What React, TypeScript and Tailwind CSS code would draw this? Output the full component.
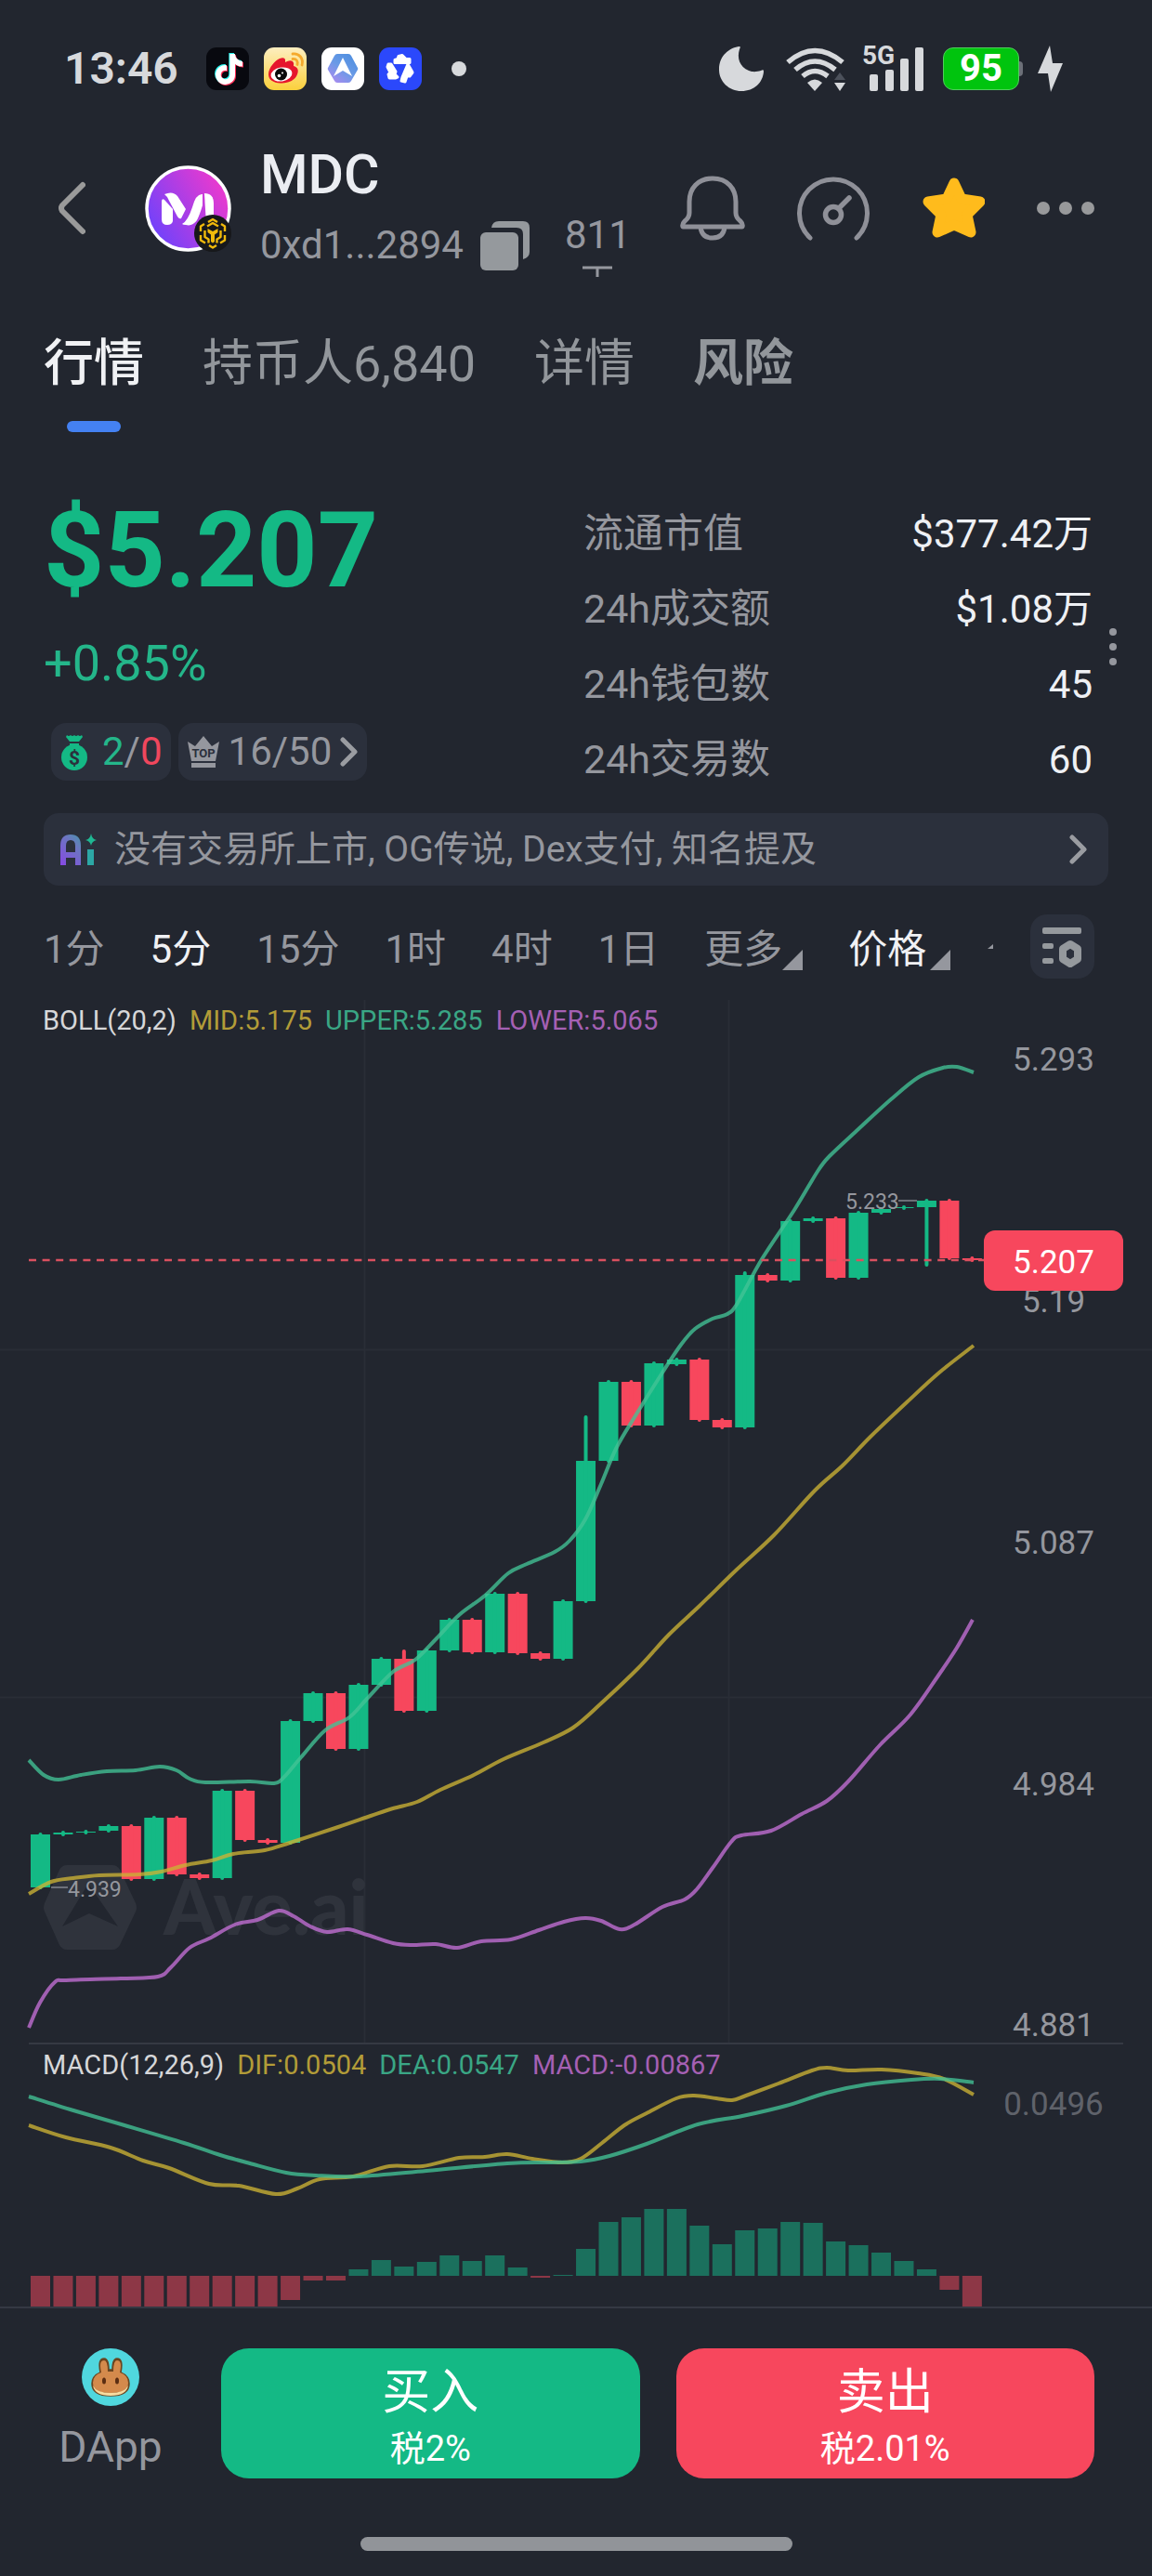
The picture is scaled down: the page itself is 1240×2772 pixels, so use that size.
import React from "react";
import { FaTiktok } from "react-icons/fa";

type Point = [number, number];

const UP = "#14b985";
const DOWN = "#f7475d";
const STEP = 24.46;
const FIRST = 43.5;
const centre = (i: number) => FIRST + i * STEP;

// [rising, body top, body bottom, wick top, wick bottom]
const candles: [boolean, number, number, number?, number?][] = [
  [true, 1974, 2031],
  [true, 1972, 1974],
  [true, 1971, 1972],
  [true, 1965, 1970],
  [false, 1965, 2022],
  [true, 1956, 2022],
  [false, 1956, 2017],
  [false, 2017, 2021],
  [true, 1927, 2021],
  [false, 1927, 1980],
  [false, 1980, 1983],
  [true, 1852, 1983],
  [true, 1822, 1852],
  [false, 1822, 1882],
  [true, 1813, 1882],
  [true, 1785, 1813],
  [false, 1785, 1841, 1775],
  [true, 1776, 1841],
  [true, 1743, 1776],
  [false, 1743, 1778],
  [true, 1715, 1778],
  [false, 1715, 1779],
  [false, 1779, 1785],
  [true, 1723, 1785],
  [true, 1572, 1723, 1523],
  [true, 1487, 1572],
  [false, 1487, 1534],
  [true, 1467, 1534],
  [true, 1463, 1468],
  [false, 1463, 1528],
  [false, 1528, 1536],
  [true, 1372, 1536, 1368],
  [false, 1372, 1378],
  [true, 1314, 1378],
  [true, 1311, 1314],
  [false, 1311, 1375],
  [true, 1305, 1375],
  [true, 1301, 1305],
  [true, 1299, 1300],
  [true, 1292, 1299, 1290, 1363],
  [false, 1292, 1354],
  [false, 1354, 1356],
];

const upper: Point[] = [
  [31, 1894], [47, 1910], [63, 1915], [87, 1910], [115, 1906], [146, 1905], [172, 1901], [190, 1905],
  [204, 1914], [221, 1918], [269, 1917], [295, 1919], [306, 1912], [324, 1891], [350, 1862], [376, 1848],
  [395, 1828], [423, 1799], [447, 1786], [470, 1763], [494, 1738], [522, 1717], [547, 1693], [567, 1683],
  [597, 1670], [613, 1658], [630, 1635], [647, 1597], [663, 1559], [683, 1525], [713, 1477], [733, 1447],
  [748, 1430], [767, 1419], [783, 1414], [794, 1402], [820, 1355], [855, 1302], [881, 1259], [894, 1243],
  [924, 1215], [959, 1183], [989, 1159], [1015, 1149], [1030, 1148], [1048, 1154],
];

const middle: Point[] = [
  [31, 2038], [55, 2025], [79, 2021], [107, 2018], [150, 2017], [174, 2014], [200, 2007], [228, 2002],
  [251, 1995], [285, 1991], [312, 1983], [364, 1966], [399, 1954], [423, 1946], [449, 1939], [474, 1926],
  [510, 1910], [542, 1893], [585, 1875], [617, 1859], [647, 1833], [687, 1795], [720, 1759], [753, 1728],
  [793, 1689], [833, 1652], [877, 1604], [907, 1577], [937, 1546], [976, 1509], [1011, 1477], [1048, 1448],
];

const lower: Point[] = [
  [31, 2182], [43, 2155], [59, 2133], [71, 2131], [130, 2129], [170, 2127], [184, 2117], [204, 2096],
  [225, 2086], [253, 2071], [277, 2066], [300, 2056], [316, 2062], [334, 2073], [352, 2079], [374, 2076],
  [395, 2082], [423, 2091], [443, 2093], [469, 2092], [492, 2096], [518, 2089], [550, 2087], [580, 2077],
  [607, 2068], [630, 2064], [647, 2067], [667, 2076], [683, 2071], [713, 2052], [737, 2044], [750, 2033],
  [767, 2010], [787, 1982], [798, 1975], [830, 1970], [863, 1952], [890, 1938], [913, 1917], [947, 1878],
  [980, 1845], [1010, 1803], [1030, 1773], [1047, 1743],
];

const dif: Point[] = [
  [31, 2287], [71, 2300], [119, 2311], [154, 2325], [182, 2333], [225, 2350], [257, 2352], [297, 2361],
  [320, 2355], [344, 2345], [380, 2342], [419, 2331], [455, 2331], [494, 2322], [522, 2321], [546, 2318],
  [573, 2323], [605, 2327], [625, 2323], [648, 2306], [672, 2287], [696, 2274], [728, 2258], [747, 2255],
  [771, 2258], [788, 2260], [803, 2255], [838, 2242], [874, 2228], [890, 2225], [913, 2228], [949, 2227],
  [988, 2231], [1016, 2237], [1048, 2254],
];

const dea: Point[] = [
  [31, 2256], [79, 2271], [134, 2287], [198, 2306], [237, 2319], [269, 2328], [308, 2338], [340, 2341],
  [387, 2342], [459, 2336], [546, 2328], [592, 2327], [625, 2326], [656, 2320], [696, 2307], [751, 2286],
  [799, 2277], [846, 2266], [890, 2252], [933, 2243], [981, 2238], [1012, 2237], [1048, 2241],
];

// Height of each histogram bar above (positive) or below (negative) the zero line
const histogram = [
  -33, -33, -33, -33, -33, -33, -33, -33, -33, -33, -33, -26, -5, -5, 7, 17, 10, 15, 22, 16, 22, 9, -2, 1,
  29, 58, 63, 72, 72, 54, 34, 49, 51, 58, 57, 37, 33, 25, 16, 7, -15, -33,
];

function smooth(points: Point[]) {
  let d = `M${points[0][0]} ${points[0][1]}`;
  for (let i = 0; i < points.length - 1; i++) {
    const a = points[Math.max(0, i - 1)];
    const b = points[i];
    const c = points[i + 1];
    const e = points[Math.min(points.length - 1, i + 2)];
    d += ` C${b[0] + (c[0] - a[0]) / 6} ${b[1] + (c[1] - a[1]) / 6} ${c[0] - (e[0] - b[0]) / 6} ${c[1] - (e[1] - b[1]) / 6} ${c[0]} ${c[1]}`;
  }
  return d;
}

function Curve({ points, color }: { points: Point[]; color: string }) {
  return <path d={smooth(points)} fill="none" stroke={color} strokeWidth="4" strokeLinejoin="round" opacity="0.78" />;
}

function WeiboIcon() {
  return (
    <svg viewBox="0 0 46 46" className="size-[46px]" aria-hidden="true">
      <defs>
        <linearGradient id="wb" x1="0" y1="0" x2="0" y2="1">
          <stop offset="0" stopColor="#fdeec0" />
          <stop offset="1" stopColor="#fbd03c" />
        </linearGradient>
      </defs>
      <rect width="46" height="46" rx="11" fill="url(#wb)" />
      <path d="M5 29C5 22 12 14 17 12q5-2 6 1 0 2 0 3 5-3 8-1 2 2 1 5c4 1 6 4 4 9-2 6-10 10-18 9.500C10 38 5 35 5 29Z" fill="#e6162d" />
      <ellipse cx="19" cy="29" rx="11.500" ry="7.500" fill="#fff" transform="rotate(-8 19 29)" />
      <circle cx="18.500" cy="29" r="6.500" fill="#0b0b0b" />
      <circle cx="16.500" cy="30.500" r="1.800" fill="#fff" />
      <circle cx="20" cy="27.500" r="1" fill="#fff" />
      <path d="M31 7c7-1 12 5 10 12M31 12.500c4-.5 6 2.500 5 6" fill="none" stroke="#f5a92c" strokeWidth="2.800" strokeLinecap="round" />
    </svg>
  );
}

function AveIcon() {
  return (
    <svg viewBox="0 0 46 46" className="size-[46px]" aria-hidden="true">
      <defs>
        <linearGradient id="av" x1="0.900" y1="0.100" x2="0.200" y2="1">
          <stop offset="0" stopColor="#4f8fe0" />
          <stop offset="0.500" stopColor="#6a9ae6" />
          <stop offset="1" stopColor="#a98bf0" />
        </linearGradient>
      </defs>
      <rect width="46" height="46" rx="11" fill="#fff" />
      <path d="M7 22 14 9q1-2 3-2h12q2 0 3 2l7 13q.6 1 0 2l-7 12q-1 2-3 2H17q-2 0-3-2L7 24q-.6-1 0-2Z" fill="url(#av)" />
      <path d="m23 11 10 20-10-6-10 6Z" fill="#fff" />
    </svg>
  );
}

function BlueIcon() {
  return (
    <svg viewBox="0 0 46 46" className="size-[46px]" aria-hidden="true">
      <rect width="46" height="46" rx="11" fill="#2b48fb" />
      <g fill="#fff" stroke="#fff" strokeWidth="3" strokeLinejoin="round">
        <path d="M17 16.500v-3l3-1 1-3 4-1 4 4h4v4Z" />
        <path d="m10 18 3 0 5 8-1 3 3 3-2 1h-7l-1-4 2-2-3-6Z" />
        <path d="m31 18 4 7 1 2-3 4-3 0-2 6-4-1 1-4Z" />
      </g>
    </svg>
  );
}

function StatusBar() {
  return (
    <div className="flex h-[148px] items-center justify-between pr-[96px] pl-[69px] text-[#d7d9dc]">
      <div className="flex items-center gap-4">
        <span className="mr-[14px] text-[48px] leading-[46px] font-semibold">13:46</span>
        <span className="relative size-[46px] rounded-[11px] bg-[#08090f]">
          <FaTiktok className="absolute top-[6px] left-[7px] size-[33px] text-[#25f4ee]" />
          <FaTiktok className="absolute top-[8px] left-[9px] size-[33px] text-[#fe2c55]" />
          <FaTiktok className="absolute top-[7px] left-[8px] size-[33px] text-white" />
        </span>
        <WeiboIcon />
        <AveIcon />
        <BlueIcon />
        <span className="ml-4 size-4 rounded-full bg-[#d7d9dc]" />
      </div>
      <div className="flex items-center">
        <svg viewBox="0 0 48 48" className="size-12" fill="currentColor" aria-hidden="true">
          <path d="M22 0C12 1 0 9 0 25c0 13 11 23 24 23 14 0 23-9 24-21 0-2-1-2-3-1-4 1-8 2-13 0C22 22 19 12 22 3c1-2 1-3 0-3Z" />
        </svg>
        <svg viewBox="0 0 66 48" className="ml-6 h-12 w-[66px]" fill="none" stroke="currentColor" strokeWidth="5.500" aria-hidden="true">
          <path d="M2 17Q31-8 61 17M10 25Q31 7 53 25M18 32Q31 21 45 32" />
          <path d="m31 48-8-9q8-7 16 0Z" fill="currentColor" stroke="none" />
          <path d="m52 36 6-8 6 8Z" fill="#4c515b" stroke="none" />
          <path d="M52 39h12l-6 9Z" fill="currentColor" stroke="none" />
        </svg>
        <div className="relative ml-4 h-12 w-[67px]">
          <span className="absolute top-0 left-0 text-[28px] leading-5 font-bold">5G</span>
          <svg viewBox="0 0 67 48" className="h-12 w-[67px]" fill="currentColor" aria-hidden="true">
            <rect x="8" y="30" width="9" height="18" rx="2" />
            <rect x="25" y="25" width="9" height="23" rx="2" />
            <rect x="41" y="13" width="9" height="35" rx="2" />
            <rect x="57" y="1" width="9" height="47" rx="2" />
          </svg>
        </div>
        <div className="ml-5 flex items-center">
          <span className="flex h-[46px] w-[82px] items-center justify-center rounded-[11px] border border-[#4fce5c] bg-[#00c40e] text-[40px] leading-10 font-bold text-white">
            95
          </span>
          <span className="h-4 w-1 rounded-r bg-[#6c7078]" />
        </div>
        <svg viewBox="0 0 27 50" className="ml-4 h-[50px] w-[27px]" fill="currentColor" aria-hidden="true">
          <path d="M13 0 0 30h11l3 20 13-31H16Z" />
        </svg>
      </div>
    </div>
  );
}

function TokenLogo() {
  return (
    <div className="relative ml-16 size-[93px] shrink-0">
      <svg viewBox="0 0 93 93" className="size-full" aria-hidden="true">
        <defs>
          <linearGradient id="mdc" x1="0" y1="0.800" x2="1" y2="0.200">
            <stop offset="0.050" stopColor="#6f42fb" />
            <stop offset="0.900" stopColor="#e63ad0" />
          </linearGradient>
        </defs>
        <circle cx="46.500" cy="46.500" r="44.500" fill="url(#mdc)" stroke="#fff" strokeWidth="3.500" />
        <g fill="#fff">
          <path d="M18 39q0-4 3-2l9 10v13q-1 4-6 4-6 0-6-6Z" />
          <path d="M21 31q9-4 14 2l9 14-5 10q-2 1-4-2L26 38q-2-5-5-7Z" />
          <path d="M40 63q6-3 11-18 4-15 11-14v12q-3 10-6 16-5 7-12 5-3 0-4-1Z" />
          <path d="M64 30q10 0 10 11v23h-8Z" />
        </g>
      </svg>
      <svg viewBox="0 0 40 40" className="absolute right-0 bottom-0 size-10" aria-hidden="true">
        <circle cx="20" cy="20" r="20" fill="#17181b" />
        <g fill="none" stroke="#f0b90b" strokeWidth="2.400" strokeLinejoin="round">
          <path d="m15 8 5-3 5 3M11 10 7 12.500V18M29 10l4 2.500V18M7 22v5.500l5 3M33 22v5.500l-5 3M16 33l4 2.500 4-2.500" />
          <path d="m14 12.500 6-3.500 6 3.500M11.500 17v7l4 2.500v4M28.500 17v7l-4 2.500v4" />
        </g>
        <path d="m14.500 15 5.500 3 5.500-3v4l-3.500 2.500V29l-2 1.500-2-1.500v-7.500L14.500 19Z" fill="#f0b90b" />
      </svg>
    </div>
  );
}

function Header() {
  return (
    <header className="flex h-[152px] items-center pr-[62px] pl-[62px] text-[#95979e]">
      <button aria-label="返回">
        <svg viewBox="0 0 30 58" className="h-[58px] w-[30px]" fill="none" stroke="#9a9a9a" strokeWidth="6" strokeLinecap="round" strokeLinejoin="round">
          <path d="M27 4 5 26q-2 3 0 6l22 22" />
        </svg>
      </button>
      <TokenLogo />
      <div className="ml-[31px] flex flex-col pt-1">
        <h1 className="text-[59px] leading-[76px] font-medium text-[#ebedf2]">MDC</h1>
        <div className="flex items-center gap-[18px] text-[42px] leading-[76px]">
          <span>0xd1...2894</span>
          <button aria-label="复制">
            <svg viewBox="0 0 53 53" className="size-[53px]" fill="#95999d">
              <rect y="12" width="41" height="41" rx="6" />
              <path d="M12 7q1-7 8-7h26q7 0 7 7v26q0 6-7 8V14q0-7-7-7Z" />
            </svg>
          </button>
        </div>
      </div>
      <div className="ml-[38px] flex flex-col items-center gap-2 self-end pb-0.5 text-[42px]">
        <span className="leading-[50px]">811</span>
        <svg viewBox="0 0 32 12" className="h-3 w-8" fill="none" stroke="currentColor" strokeWidth="3" aria-hidden="true">
          <path d="M0 2h32M16 2v10" />
        </svg>
      </div>
      <div className="ml-auto flex items-center gap-14">
        <button aria-label="提醒">
          <svg viewBox="0 0 70 70" className="size-[70px]" fill="none" stroke="#8f9098" strokeWidth="5" strokeLinejoin="round">
            <path d="M35 3C19 3 10 14 10 28v12q0 5-5 9-3 3-2 6h64q1-3-2-6-5-4-5-9V28C60 14 51 3 35 3Z" />
            <path d="M22 55q1 12 13 12t13-12" />
          </svg>
        </button>
        <button aria-label="仪表盘">
          <svg viewBox="0 0 78 70" className="h-[70px] w-[78px]" fill="none" stroke="#8f9098" strokeWidth="5" strokeLinecap="round">
            <path d="M14 67A36.500 36.500 0 1 1 64 67" />
            <circle cx="39" cy="42" r="8.500" strokeWidth="5.500" />
            <path d="m45 35 11-11" strokeWidth="5.500" />
          </svg>
        </button>
        <button aria-label="收藏">
          <svg viewBox="0 0 68 68" className="size-[68px]" fill="#ffbb1c" stroke="#ffbb1c" strokeWidth="11" strokeLinejoin="round">
            <path d="m35 7 8 17 20 3-14 14 4 19-18-8-18 8 4-19L7 27l20-3Z" />
          </svg>
        </button>
        <button aria-label="更多" className="flex gap-[10px]">
          <span className="size-[14px] rounded-full bg-[#98999b]" />
          <span className="size-[14px] rounded-full bg-[#98999b]" />
          <span className="size-[14px] rounded-full bg-[#98999b]" />
        </button>
      </div>
    </header>
  );
}

function Tabs() {
  return (
    <nav className="flex items-start gap-[63px] px-[47px] pt-[60px] text-[54px] leading-[64px] text-[#92969b]">
      <button className="flex flex-col items-center gap-[29px] font-medium text-[#f0f1f4]">
        行情
        <span className="h-3 w-[58px] rounded-full bg-[#4481f2]" />
      </button>
      <button>持币人6,840</button>
      <button>详情</button>
      <button className="font-bold">风险</button>
    </nav>
  );
}

const stats = [
  ["流通市值", "$377.42万"],
  ["24h成交额", "$1.08万"],
  ["24h钱包数", "45"],
  ["24h交易数", "60"],
];

function Chevron() {
  return (
    <svg viewBox="0 0 20 34" className="h-[34px] w-5" fill="none" stroke="#9a9ca1" strokeWidth="5" strokeLinecap="round" strokeLinejoin="round" aria-hidden="true">
      <path d="m3 4 13 13L3 30" />
    </svg>
  );
}

function Summary() {
  return (
    <section className="flex pt-[69px] pr-[38px] pl-[47px]">
      <div className="grow">
        <p className="text-[114px] leading-[116px] font-bold text-[#14b985]">$5.207</p>
        <p className="mt-8 text-[54px] leading-16 text-[#24b68a]">+0.85%</p>
        <div className="mt-8 ml-2 flex gap-2 text-[42px] leading-[62px] text-[#95979e]">
          <button className="flex items-center gap-[14px] rounded-2xl bg-[#2b303c] px-[9px]">
            <svg viewBox="0 0 32 40" className="h-10 w-8" aria-hidden="true">
              <path d="M8 2q2 2 4 0 2 2 4 0 2 2 4 0 2 2 4 0l1 2-4 5H11L7 4ZM11 11h10v2H11Z" fill="#14b985" />
              <circle cx="16" cy="26" r="14" fill="#14b985" />
              <text x="16" y="34" textAnchor="middle" fontSize="21" fontWeight="700" fill="#2b303c">$</text>
            </svg>
            <span>
              <span className="text-[#24b68a]">2</span>/<span className="text-[#f0475d]">0</span>
            </span>
          </button>
          <button className="flex items-center gap-[9px] rounded-2xl bg-[#2b303c] px-[9px]">
            <svg viewBox="0 0 36 36" className="size-9" aria-hidden="true">
              <path d="M1 7 9 12 18 1l9 11 8-5-4 21H5ZM5 30h26v5H5Z" fill="#95979e" />
              <text x="18" y="24" textAnchor="middle" fontSize="13" fontWeight="700" fill="#2b303c">TOP</text>
            </svg>
            <span>16/50</span>
            <Chevron />
          </button>
        </div>
      </div>
      <dl className="w-[548px] text-[42px] leading-[81px]">
        {stats.map(([label, value]) => (
          <div key={label} className="flex justify-between">
            <dt className="text-[43px] text-[#95979e]">{label}</dt>
            <dd className="text-[#eef0f4]">{value}</dd>
          </div>
        ))}
      </dl>
      <button aria-label="展开" className="ml-[18px] flex flex-col gap-2 self-center">
        <span className="size-2 rounded-full bg-[#95979e]" />
        <span className="size-2 rounded-full bg-[#95979e]" />
        <span className="size-2 rounded-full bg-[#95979e]" />
      </button>
    </section>
  );
}

function AiBar() {
  return (
    <button className="mx-[47px] mt-[17px] flex h-[78px] items-center rounded-2xl bg-[#2b303c] px-[18px] text-[39px] leading-[48px] text-[#95979e]">
      <svg viewBox="0 0 40 40" className="size-10" aria-hidden="true">
        <defs>
          <linearGradient id="ai" x1="0" y1="40" x2="40" y2="0" gradientUnits="userSpaceOnUse">
            <stop offset="0" stopColor="#8a44e8" />
            <stop offset="0.500" stopColor="#6b77c0" />
            <stop offset="1" stopColor="#1fb893" />
          </linearGradient>
        </defs>
        <path d="M3 37V16q0-9 8-9t8 9v21M3 26h16" fill="none" stroke="url(#ai)" strokeWidth="6" />
        <path d="M29 20h7v17h-7Z" fill="#2ca7a5" />
        <path d="M33 3q1 6 6 7-5 1-6 6-1-5-6-6 5-1 6-7Z" fill="#1fb893" />
      </svg>
      <span className="ml-[18px]">没有交易所上市, OG传说, Dex支付, 知名提及</span>
      <span className="ml-auto pr-1">
        <Chevron />
      </span>
    </button>
  );
}

function Corner() {
  return (
    <svg viewBox="0 0 22 22" className="mb-2 size-[22px] self-end" fill="#95979e" aria-hidden="true">
      <path d="M22 0v22H0Z" />
    </svg>
  );
}

function Periods() {
  return (
    <div className="mt-[31px] flex h-[69px] items-center justify-between pr-[62px] pl-[47px] text-[42px] leading-[60px] text-[#95979e]">
      <div className="flex items-center gap-[49px] pt-[6px]">
        <button>1分</button>
        <button className="text-[#f0f1f4]">5分</button>
        <button>15分</button>
        <button>1时</button>
        <button>4时</button>
        <button>1日</button>
        <button className="flex">
          更多
          <Corner />
        </button>
        <button className="flex gap-1 text-[#f0f1f4]">
          价格
          <Corner />
        </button>
      </div>
      <svg viewBox="0 0 6 6" className="size-[6px]" fill="#95979e" aria-hidden="true">
        <path d="M6 0v5H0Z" />
      </svg>
      <button aria-label="图表设置" className="flex size-[69px] items-center justify-center rounded-[18px] bg-[#2b303c]">
        <svg viewBox="0 0 44 44" className="size-11" aria-hidden="true">
          <g fill="#95999d">
            <rect x="1" y="1" width="42" height="7" rx="2" />
            <rect x="1" y="18" width="12" height="6" rx="2" />
            <rect x="1" y="34" width="12" height="6" rx="2" />
          </g>
          <path d="m31 19 8 5v11l-8 5-8-5V24Z" fill="none" stroke="#95999d" strokeWidth="8" strokeLinejoin="round" />
        </svg>
      </button>
    </div>
  );
}

function Legend({ items }: { items: string[] }) {
  return (
    <>
      <span className="text-[#d6d7d9]">{items[0]}</span>
      <span className="text-[#b29c38]">{items[1]}</span>
      <span className="text-[#3aa685]">{items[2]}</span>
      <span className="text-[#a560b4]">{items[3]}</span>
    </>
  );
}

function PriceChart() {
  return (
    <div className="relative">
      <div className="absolute top-[29px] left-[46px] flex gap-[14px] text-[29px] leading-8">
        <Legend items={["BOLL(20,2)", "MID:5.175", "UPPER:5.285", "LOWER:5.065"]} />
      </div>
      <svg viewBox="0 1053 1240 1147" className="block w-full overflow-visible">
        <path d="M392.500 1076V2199M784.500 1076V2199M0 1452.500H1240M0 1826.500H1240" stroke="#292d36" strokeWidth="2" />
        <path d="M31 2199H1209" stroke="#353943" strokeWidth="2" />
        <path d="M72 2007h49q5 0 8 5l17 36q2 5 0 9l-17 36q-3 5-8 5H72q-5 0-8-5l-16-36q-2-4 0-9l16-36q3-5 8-5ZM95 2027l-28 46 29-14 31 14Z" fill="#2f333c" fillRule="evenodd" />
        <text x="176" y="2082" fontSize="81" fontWeight="900" fill="#2f333c" className="font-['Lato',sans-serif]">Ave.ai</text>
        {candles.map(([rising, top, bottom, high, low], i) => (
          <g key={i} fill={rising ? UP : DOWN}>
            <rect x={centre(i) - 10.5} y={top} width="21" height={bottom - top} />
            <rect x={centre(i) - 2} y={high ?? top - 2} width="4" height={(low ?? bottom + 2) - (high ?? top - 2)} rx="2" />
          </g>
        ))}
        <Curve points={middle} color="#ccb234" />
        <Curve points={upper} color="#43c396" />
        <Curve points={lower} color="#c46fd6" />
        <path d="M31 1356H1059" stroke="#d9505f" strokeWidth="2.500" strokeDasharray="8 6.600" />
        <path d="M967 1292h20M55 2031h18" stroke="#84878e" strokeWidth="1.500" />
        <g fill="#95979e" fontSize="35" textAnchor="middle">
          <text x="1134" y="1152">5.293</text>
          <text x="1134" y="1412">5.19</text>
          <text x="1134" y="1672">5.087</text>
          <text x="1134" y="1932">4.984</text>
          <text x="1134" y="2191">4.881</text>
        </g>
        <g fill="#95979e" fontSize="23">
          <text x="910" y="1301">5.233</text>
          <text x="73" y="2041">4.939</text>
        </g>
        <rect x="1059" y="1324" width="150" height="65" rx="12" fill={DOWN} />
        <text x="1134" y="1370" fontSize="35" textAnchor="middle" fill="#fff">5.207</text>
      </svg>
    </div>
  );
}

function MacdChart() {
  return (
    <div className="relative border-b-2 border-[#353943]">
      <div className="absolute top-[6px] left-[46px] flex gap-[14px] text-[29px] leading-8">
        <Legend items={["MACD(12,26,9)", "DIF:0.0504", "DEA:0.0547", "MACD:-0.00867"]} />
      </div>
      <svg viewBox="0 2200 1240 282" className="block w-full">
        {histogram.map((value, i) => (
          <rect
            key={i}
            x={centre(i) - 10.5}
            y={value > 0 ? 2449 - value : 2449}
            width="21"
            height={Math.abs(value)}
            fill={value > 0 ? "#1b705d" : "#8d3746"}
          />
        ))}
        <Curve points={dif} color="#ccb234" />
        <Curve points={dea} color="#43c396" />
        <text x="1134" y="2276" fontSize="35" textAnchor="middle" fill="#5f626a">0.0496</text>
      </svg>
    </div>
  );
}

function ActionBar() {
  return (
    <footer className="pt-[43px] pb-[27px]">
      <div className="flex gap-10 pr-[62px] pl-[47px]">
        <a href="#dapp" className="flex w-36 flex-col items-center gap-[14px] text-[46px] leading-[60px] text-[#95979e]">
          <svg viewBox="0 0 62 62" className="size-[62px]" aria-hidden="true">
            <circle cx="31" cy="31" r="31" fill="#50d7de" />
            <path d="M11 38q0-8 9-12-3-15 4-15 5 0 5 12h4q0-12 5-12 7 0 4 15 9 4 9 12 0 13-20 13T11 38Z" fill="#6b4520" stroke="#6b4520" strokeWidth="1.500" />
            <path d="M12 37q0-8 9-11-3-13 3-13 4 0 4 12h6q0-12 4-12 6 0 3 13 9 3 9 11 0 11-19 11T12 37Z" fill="#d48a4c" />
            <path d="M12 40q4 8 19 8t19-8q-2 11-19 11T12 40Z" fill="#f6dba0" />
            <ellipse cx="24" cy="35" rx="2" ry="3.500" fill="#5a2d12" />
            <ellipse cx="38" cy="35" rx="2" ry="3.500" fill="#5a2d12" />
          </svg>
          DApp
        </a>
        <div className="flex h-[140px] grow gap-[39px] pl-[7px] text-white">
          <button className="flex flex-1 flex-col items-center gap-2 rounded-[30px] bg-[#14b985] pt-[18px]">
            <span className="text-[52px] leading-[60px]">买入</span>
            <span className="text-[38px] leading-[44px]">税2%</span>
          </button>
          <button className="flex flex-1 flex-col items-center gap-2 rounded-[30px] bg-[#f7475d] pt-[18px]">
            <span className="text-[52px] leading-[60px]">卖出</span>
            <span className="text-[38px] leading-[44px]">税2.01%</span>
          </button>
        </div>
      </div>
      <div className="mx-auto mt-[63px] h-[15px] w-[465px] rounded-full bg-[#919499]" />
    </footer>
  );
}

export default function App() {
  return (
    <main className="flex min-h-screen flex-col bg-[#22262f] font-['Roboto','Noto_Sans_CJK_SC',sans-serif]">
      <StatusBar />
      <Header />
      <Tabs />
      <Summary />
      <AiBar />
      <Periods />
      <PriceChart />
      <MacdChart />
      <ActionBar />
    </main>
  );
}
